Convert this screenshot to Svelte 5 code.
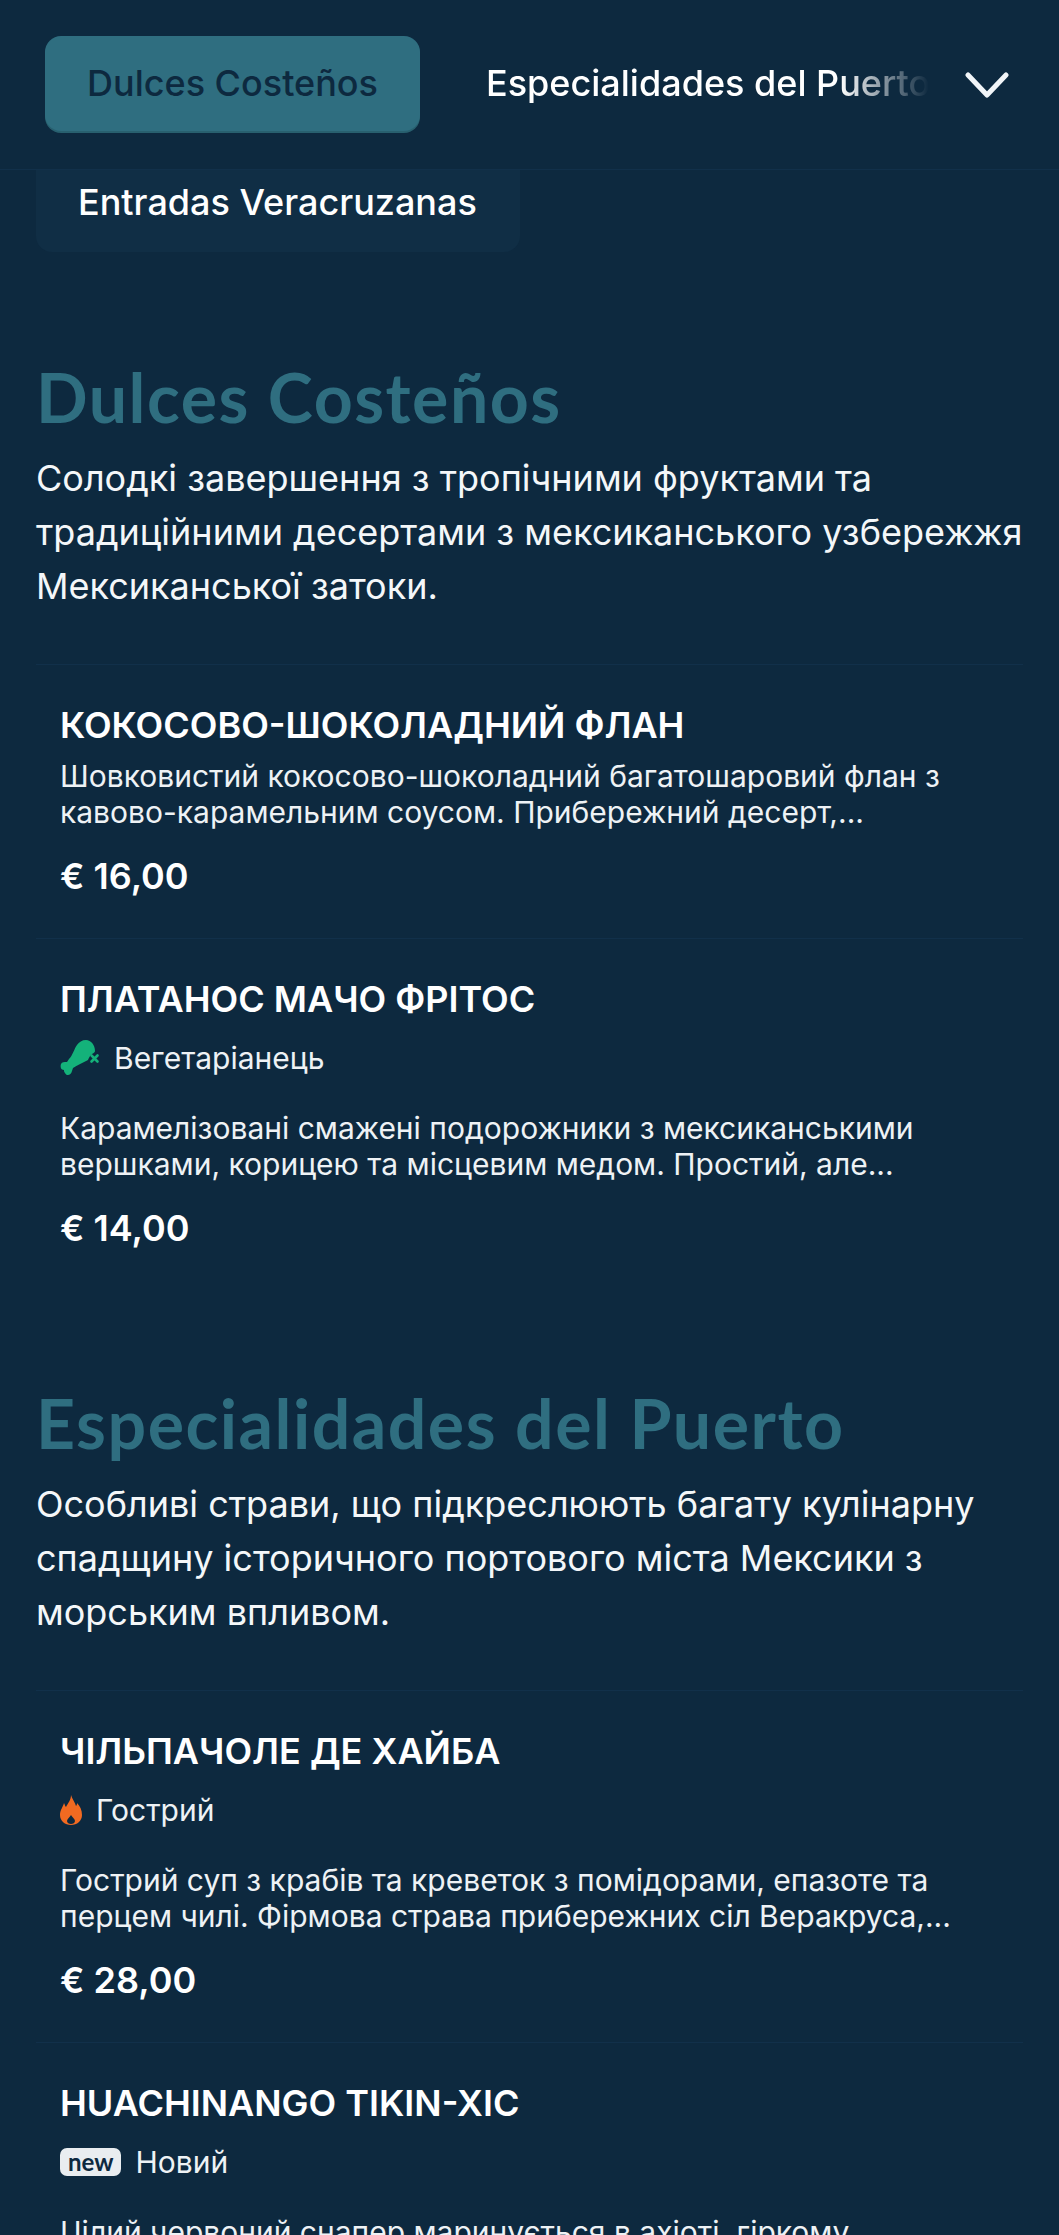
<script>
	const sections = [
		{
			title: 'Dulces Costeños',
			intro:
				'Солодкі завершення з тропічними фруктами та традиційними десертами з мексиканського узбережжя Мексиканської затоки.',
			dishes: [
				{
					name: 'КОКОСОВО-ШОКОЛАДНИЙ ФЛАН',
					lines: [
						'Шовковистий кокосово-шоколадний багатошаровий флан з',
						'кавово-карамельним соусом. Прибережний десерт,...'
					],
					price: '€ 16,00'
				},
				{
					name: 'ПЛАТАНОС МАЧО ФРІТОС',
					tag: 'veg',
					tagLabel: 'Вегетаріанець',
					lines: [
						'Карамелізовані смажені подорожники з мексиканськими',
						'вершками, корицею та місцевим медом. Простий, але...'
					],
					price: '€ 14,00'
				}
			]
		},
		{
			title: 'Especialidades del Puerto',
			intro:
				'Особливі страви, що підкреслюють багату кулінарну спадщину історичного портового міста Мексики з морським впливом.',
			dishes: [
				{
					name: 'ЧІЛЬПАЧОЛЕ ДЕ ХАЙБА',
					tag: 'hot',
					tagLabel: 'Гострий',
					lines: [
						'Гострий суп з крабів та креветок з помідорами, епазоте та',
						'перцем чилі. Фірмова страва прибережних сіл Веракруса,...'
					],
					price: '€ 28,00'
				},
				{
					name: 'HUACHINANGO TIKIN-XIC',
					tag: 'new',
					tagLabel: 'Новий',
					lines: ['Цілий червоний снапер маринується в ахіоті, гіркому'],
					price: ''
				}
			]
		}
	];
</script>

<div class="page">
	<header class="tabs">
		<button class="tab active">Dulces Costeños</button>
		<div class="rest">
			<button class="tab fade">Especialidades del Puerto</button>
		</div>
		<button class="more" aria-label="Більше">
			<svg viewBox="0 0 44 28" width="44" height="28" fill="none">
				<path d="M3 4 L22 24 L41 4" stroke="#f1f5f8" stroke-width="5" stroke-linecap="round" stroke-linejoin="round" />
			</svg>
		</button>
	</header>

	<div class="chipClip">
		<div class="chip">Entradas Veracruzanas</div>
	</div>

	{#each sections as section}
		<section>
			<h2>{section.title}</h2>
			<p class="intro">{section.intro}</p>
			<div class="dishes">
				{#each section.dishes as dish}
					<article class="dish">
						<h3>{dish.name}</h3>
						{#if dish.tag}
							<div class="tag">
								{#if dish.tag === 'veg'}
									<svg viewBox="0 0 40 36" width="40" height="36">
										<path
											fill="#14b27a"
											d="M26 0C31 0 35 5 35 11C35 12 34 13 32 14C30 15 29 18 28 20C23 23 17 25 13 28L12 31C11 36 6 36 5 33C4 32 4 31 4 30C1 30 0 27 1 24C2 22 4 22 7 22L9 19C13 15 14 9 17 5C19 2 22 0 26 0Z"
										/>
										<path d="M31.5 15.5l6 6m0-6l-6 6" stroke="#14b27a" stroke-width="2.6" stroke-linecap="round" />
									</svg>
								{:else if dish.tag === 'hot'}
									<svg viewBox="0 0 22 30" width="22" height="30">
										<path
											fill="#f26a21"
											fill-rule="evenodd"
											d="M11 0C12 4 15 7 16 11C17 10 17 9 17 8C20 11 22 15 22 20C22 26 17 30 11 30C5 30 0 26 0 20C0 15 3 12 4 8C5 10 5 11 6 12C8 8 11 5 11 0ZM11 20C10 22 7 24 7 26C7 28 9 29 11 29C13 29 15 28 15 26C15 24 12 22 11 20Z"
										/>
									</svg>
								{:else}
									<span class="newBadge">new</span>
								{/if}
								<span>{dish.tagLabel}</span>
							</div>
						{/if}
						<p class="desc">
							{#each dish.lines as line}
								<span>{line}</span>
							{/each}
						</p>
						{#if dish.price}
							<div class="price">{dish.price}</div>
						{/if}
					</article>
				{/each}
			</div>
		</section>
	{/each}
</div>

<style>
	:global(body) {
		background: #0d293f;
	}

	.page {
		display: flex;
		flex-direction: column;
		height: 2235px;
		overflow: hidden;
		background: #0d293f;
		color: #fff;
		font-family: Inter, 'Noto Sans', sans-serif;
	}

	.page > * {
		flex: none;
	}

	button {
		font: inherit;
		background: none;
		border: none;
		color: inherit;
		padding: 0;
	}

	.tabs {
		display: flex;
		align-items: center;
		height: 170px;
		padding: 0 45px;
		box-sizing: border-box;
		border-bottom: 1px solid #11304a;
	}

	.tab {
		font-size: 36px;
		font-weight: 500;
		white-space: nowrap;
	}

	.tab.active {
		flex: none;
		width: 375px;
		height: 95px;
		margin-top: -3px;
		background: #2f6e80;
		color: #0d293f;
		border-radius: 16px;
		box-shadow: 0 2px 0 #28606f;
	}

	.rest {
		flex: 1;
		overflow: hidden;
		margin-left: 66px;
		margin-top: -3px;
		mask-image: linear-gradient(to right, #000 80%, transparent 100%);
	}

	.more {
		flex: none;
		display: flex;
		margin-left: 36px;
		margin-right: 5px;
	}

	.chipClip {
		height: 82px;
		overflow: hidden;
		padding-left: 36px;
		margin-bottom: 12px;
	}

	.chip {
		width: 484px;
		height: 100px;
		margin-top: -18px;
		box-sizing: border-box;
		padding: 18px 42px 0;
		line-height: 65px;
		font-size: 36px;
		font-weight: 500;
		background: #102e45;
		border-radius: 16px;
	}

	section {
		padding: 0 36px;
	}

	h2 {
		margin: 93px 0 0;
		font-family: Lato, 'Noto Sans', sans-serif;
		font-size: 68px;
		line-height: 80px;
		font-weight: 700;
		letter-spacing: 1.5px;
		color: #2f6e80;
	}

	.intro {
		margin: 14px 0 0;
		font-size: 36px;
		line-height: 54px;
		color: #f4f7f9;
	}

	.dishes {
		margin-top: 51px;
	}

	.dish {
		padding: 36px 24px 38px;
		border-top: 1px solid #11304a;
	}

	h3 {
		margin: 0;
		font-size: 36px;
		line-height: 48px;
		font-weight: 600;
	}

	.tag {
		display: flex;
		align-items: center;
		gap: 14px;
		margin-top: 13px;
		height: 44px;
		font-size: 30px;
		color: #eef2f5;
	}

	.tag + .desc {
		margin-top: 30px;
	}

	.newBadge {
		background: #e9edf0;
		color: #0d293f;
		border-radius: 7px;
		padding: 0 8px;
		font-family: Lato, sans-serif;
		font-weight: 700;
		font-size: 24px;
		line-height: 28px;
	}

	.desc {
		margin: 9px 0 0;
		font-size: 30px;
		line-height: 36px;
		color: #eef2f5;
	}

	.desc span {
		display: block;
		white-space: nowrap;
	}

	.price {
		margin-top: 22px;
		font-size: 36px;
		line-height: 48px;
		font-weight: 600;
	}
</style>
